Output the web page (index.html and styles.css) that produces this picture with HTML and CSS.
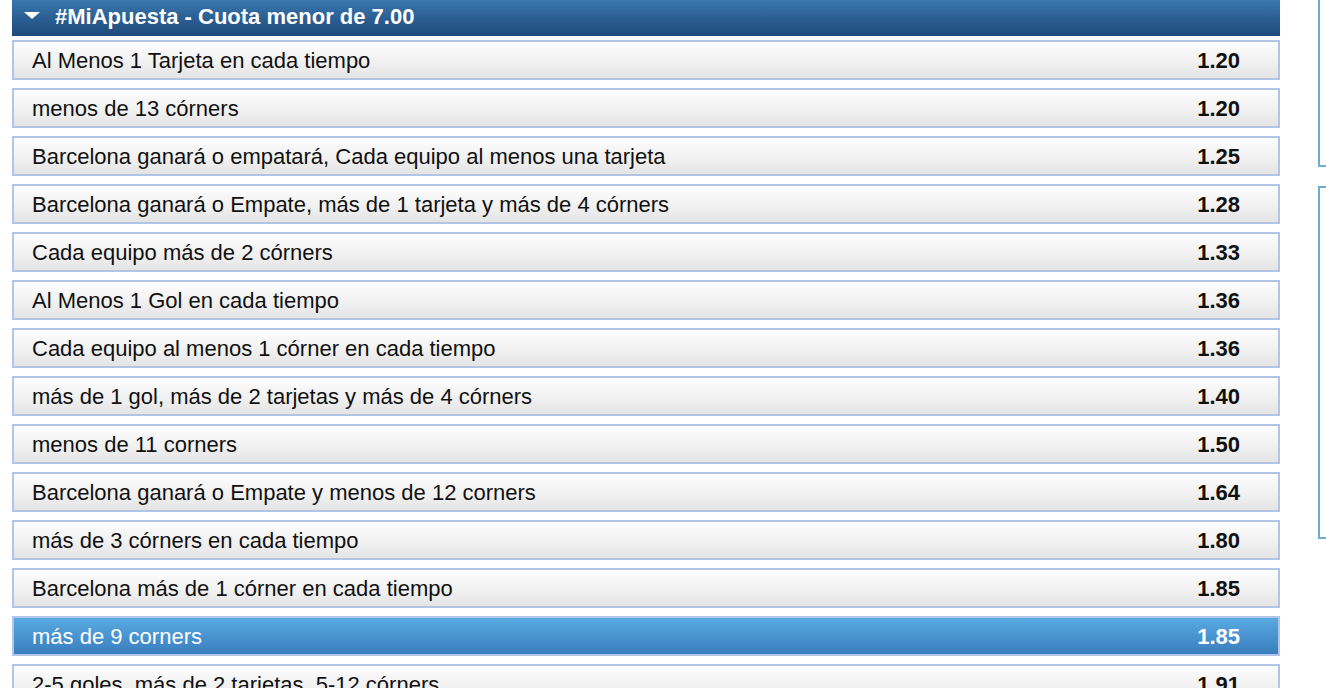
FILE: index.html
```html
<!DOCTYPE html>
<html lang="es">
<head>
<meta charset="utf-8">
<title>#MiApuesta</title>
<link rel="stylesheet" href="styles.css">
</head>
<body>
<div class="page">
  <main class="market">
    <div class="market-head">
      <span class="caret"></span>
      <span class="market-title">#MiApuesta - Cuota menor de 7.00</span>
    </div>
    <ul class="bets">
      <li class="bet"><span class="bet-name">Al Menos 1 Tarjeta en cada tiempo</span><span class="bet-odds">1.20</span></li>
      <li class="bet"><span class="bet-name">menos de 13 córners</span><span class="bet-odds">1.20</span></li>
      <li class="bet"><span class="bet-name">Barcelona ganará o empatará, Cada equipo al menos una tarjeta</span><span class="bet-odds">1.25</span></li>
      <li class="bet"><span class="bet-name">Barcelona ganará o Empate, más de 1 tarjeta y más de 4 córners</span><span class="bet-odds">1.28</span></li>
      <li class="bet"><span class="bet-name">Cada equipo más de 2 córners</span><span class="bet-odds">1.33</span></li>
      <li class="bet"><span class="bet-name">Al Menos 1 Gol en cada tiempo</span><span class="bet-odds">1.36</span></li>
      <li class="bet"><span class="bet-name">Cada equipo al menos 1 córner en cada tiempo</span><span class="bet-odds">1.36</span></li>
      <li class="bet"><span class="bet-name">más de 1 gol, más de 2 tarjetas y más de 4 córners</span><span class="bet-odds">1.40</span></li>
      <li class="bet"><span class="bet-name">menos de 11 corners</span><span class="bet-odds">1.50</span></li>
      <li class="bet"><span class="bet-name">Barcelona ganará o Empate y menos de 12 corners</span><span class="bet-odds">1.64</span></li>
      <li class="bet"><span class="bet-name">más de 3 córners en cada tiempo</span><span class="bet-odds">1.80</span></li>
      <li class="bet"><span class="bet-name">Barcelona más de 1 córner en cada tiempo</span><span class="bet-odds">1.85</span></li>
      <li class="bet bet-selected"><span class="bet-name">más de 9 corners</span><span class="bet-odds">1.85</span></li>
      <li class="bet"><span class="bet-name">2-5 goles, más de 2 tarjetas, 5-12 córners</span><span class="bet-odds">1.91</span></li>
    </ul>
  </main>
  <aside class="side">
    <div class="side-box side-box-first"></div>
    <div class="side-box side-box-second"></div>
  </aside>
</div>
</body>
</html>
```
FILE: styles.css
```css
html, body {
  margin: 0;
  padding: 0;
  background: #ffffff;
  overflow: hidden;
}
body {
  font-family: "Liberation Sans", Arial, sans-serif;
  width: 1326px;
  height: 688px;
}
.page {
  display: flex;
  padding-left: 12px;
  gap: 38px;
}
.market {
  width: 1268px;
  flex: none;
}
.market-head {
  height: 36px;
  display: flex;
  align-items: center;
  background: linear-gradient(to bottom, #3a78ae 0%, #2b5f93 50%, #1d4a7b 100%);
  color: #ffffff;
  box-sizing: border-box;
  padding-left: 12px;
  padding-bottom: 3px;
}
.caret {
  width: 0;
  height: 0;
  border-left: 8px solid transparent;
  border-right: 8px solid transparent;
  border-top: 7px solid #ffffff;
  margin-right: 15px;
  margin-top: -3px;
}
.market-title {
  font-weight: bold;
  font-size: 22px;
  letter-spacing: 0;
}
.bets {
  list-style: none;
  margin: 4px 0 0;
  padding: 0;
  display: flex;
  flex-direction: column;
  gap: 8px;
}
.bet {
  height: 40px;
  box-sizing: border-box;
  border: 2px solid #b1c5e6;
  background: linear-gradient(to bottom, #fdfdfd 0%, #f1f1f1 55%, #e4e4e4 100%);
  display: flex;
  align-items: center;
  justify-content: space-between;
  padding: 1px 38px 0 18px;
  font-size: 22px;
  color: #111111;
}
.bet-odds {
  font-weight: bold;
}
.bet-selected {
  background: linear-gradient(to bottom, #5aaae2 0%, #4791cf 55%, #3a7fbf 100%);
  color: #ffffff;
}
.side {
  flex: 1;
  display: flex;
  flex-direction: column;
}
.side-box {
  box-sizing: border-box;
  border: 2px solid #6aaed6;
  border-right: none;
}
.side-box-first {
  height: 167px;
  border-top: none;
}
.side-box-second {
  margin-top: 19px;
  height: 353px;
}
```
